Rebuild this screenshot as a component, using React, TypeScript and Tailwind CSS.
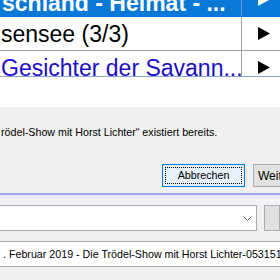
import React from "react";

const rows = [
  { text: "schland - Heimat - ...", kind: "selected" },
  { text: "sensee (3/3)", kind: "plain" },
  { text: "Gesichter der Savann...", kind: "link" },
];

function Arrow({ white }: { white?: boolean }) {
  return (
    <svg width="12" height="13" viewBox="0 0 12 13" className="shrink-0">
      <polygon points="0,0 12,6.5 0,13" fill={white ? "#ffffff" : "#000000"} />
    </svg>
  );
}

function ListRows() {
  return (
    <div className="h-[76px] shrink-0 overflow-hidden bg-white font-['Liberation_Sans',Arial,sans-serif]">
      <div className="-mt-[17px]">
        {rows.map((row) => {
          const selected = row.kind === "selected";
          return (
            <div
              key={row.text}
              className={
                selected
                  ? "flex h-[34px] border-b border-[#0a78d7] bg-[#0a78d7]"
                  : "flex h-[34px] border-b border-[#a0a0a0]"
              }
            >
              <div
                className={
                  selected
                    ? "flex w-[242px] shrink-0 items-center overflow-hidden border-r border-[#5a9fe2] pl-[2px] pt-[6px]"
                    : "flex w-[242px] shrink-0 items-center overflow-hidden border-r border-[#a0a0a0] pl-[1px]"
                }
              >
                <span
                  className={
                    selected
                      ? "whitespace-nowrap text-[23px] leading-[24px] font-bold text-white"
                      : row.kind === "link"
                        ? "whitespace-nowrap text-[23px] leading-[24px] text-[#1a0dcc]"
                        : "whitespace-nowrap text-[23px] leading-[24px] text-black"
                  }
                >
                  {row.text}
                </span>
              </div>
              <div className="flex flex-1 items-center pl-[16px]">
                <Arrow white={selected} />
              </div>
            </div>
          );
        })}
      </div>
    </div>
  );
}

function Dialog() {
  return (
    <div className="shrink-0 border-t border-[#8aa4d6] font-['Liberation_Sans',Arial,sans-serif] text-[10.7px]">
      <div className="h-[30px] bg-white" />
      <div className="h-[86px] bg-[#f0f0f0] pt-[17px]">
        <p className="whitespace-nowrap pl-[1px] leading-[16px] text-black">
          rödel-Show mit Horst Lichter“ existiert bereits.
        </p>
        <div className="mt-[24px] flex gap-[8px] pl-[162px]">
          <button
            type="button"
            className="flex h-[23px] w-[83px] shrink-0 items-center justify-center border border-[#0078d7] bg-[#e5f1fb] p-[2px]"
          >
            <span className="flex h-full w-full items-center justify-center border border-dotted border-black leading-none text-black">
              Abbrechen
            </span>
          </button>
          <button
            type="button"
            className="flex h-[23px] w-[83px] shrink-0 items-center justify-start border border-[#adadad] bg-[#e1e1e1] pl-[4px] text-[12px] leading-none text-black"
          >
            Weiter
          </button>
        </div>
      </div>
      <div className="h-[2px] bg-[#a3a3ee]" />
    </div>
  );
}

function FileForm() {
  return (
    <div className="flex flex-1 flex-col bg-[#f0f0f0] font-['Liberation_Sans',Arial,sans-serif] text-[10.7px]">
      <div className="h-[3px] bg-[#e6e6f5]" />
      <div className="h-[7px] bg-[#f2f2f6]" />
      <div className="flex h-[26px] shrink-0">
        <div className="flex w-[257px] shrink-0 items-center justify-end border-y border-r border-[#acacac] bg-white pr-[4px]">
          <svg width="9" height="5" viewBox="0 0 9 5">
            <polyline points="0.5,0.5 4.5,4.5 8.5,0.5" fill="none" stroke="#555555" strokeWidth="1" />
          </svg>
        </div>
        <div className="ml-[7px] flex-1 border border-[#adadad] bg-[#e1e1e1]" />
      </div>
      <div className="mt-[10px] flex h-[26px] shrink-0 items-center border-y border-[#acacac] bg-white pl-[3px]">
        <span className="whitespace-nowrap text-black">
          . Februar 2019 - Die Trödel-Show mit Horst Lichter-0531511
        </span>
      </div>
    </div>
  );
}

export default function App() {
  return (
    <div className="flex h-[280px] w-[280px] flex-col overflow-hidden bg-[#f0f0f0]">
      <ListRows />
      <Dialog />
      <FileForm />
    </div>
  );
}
